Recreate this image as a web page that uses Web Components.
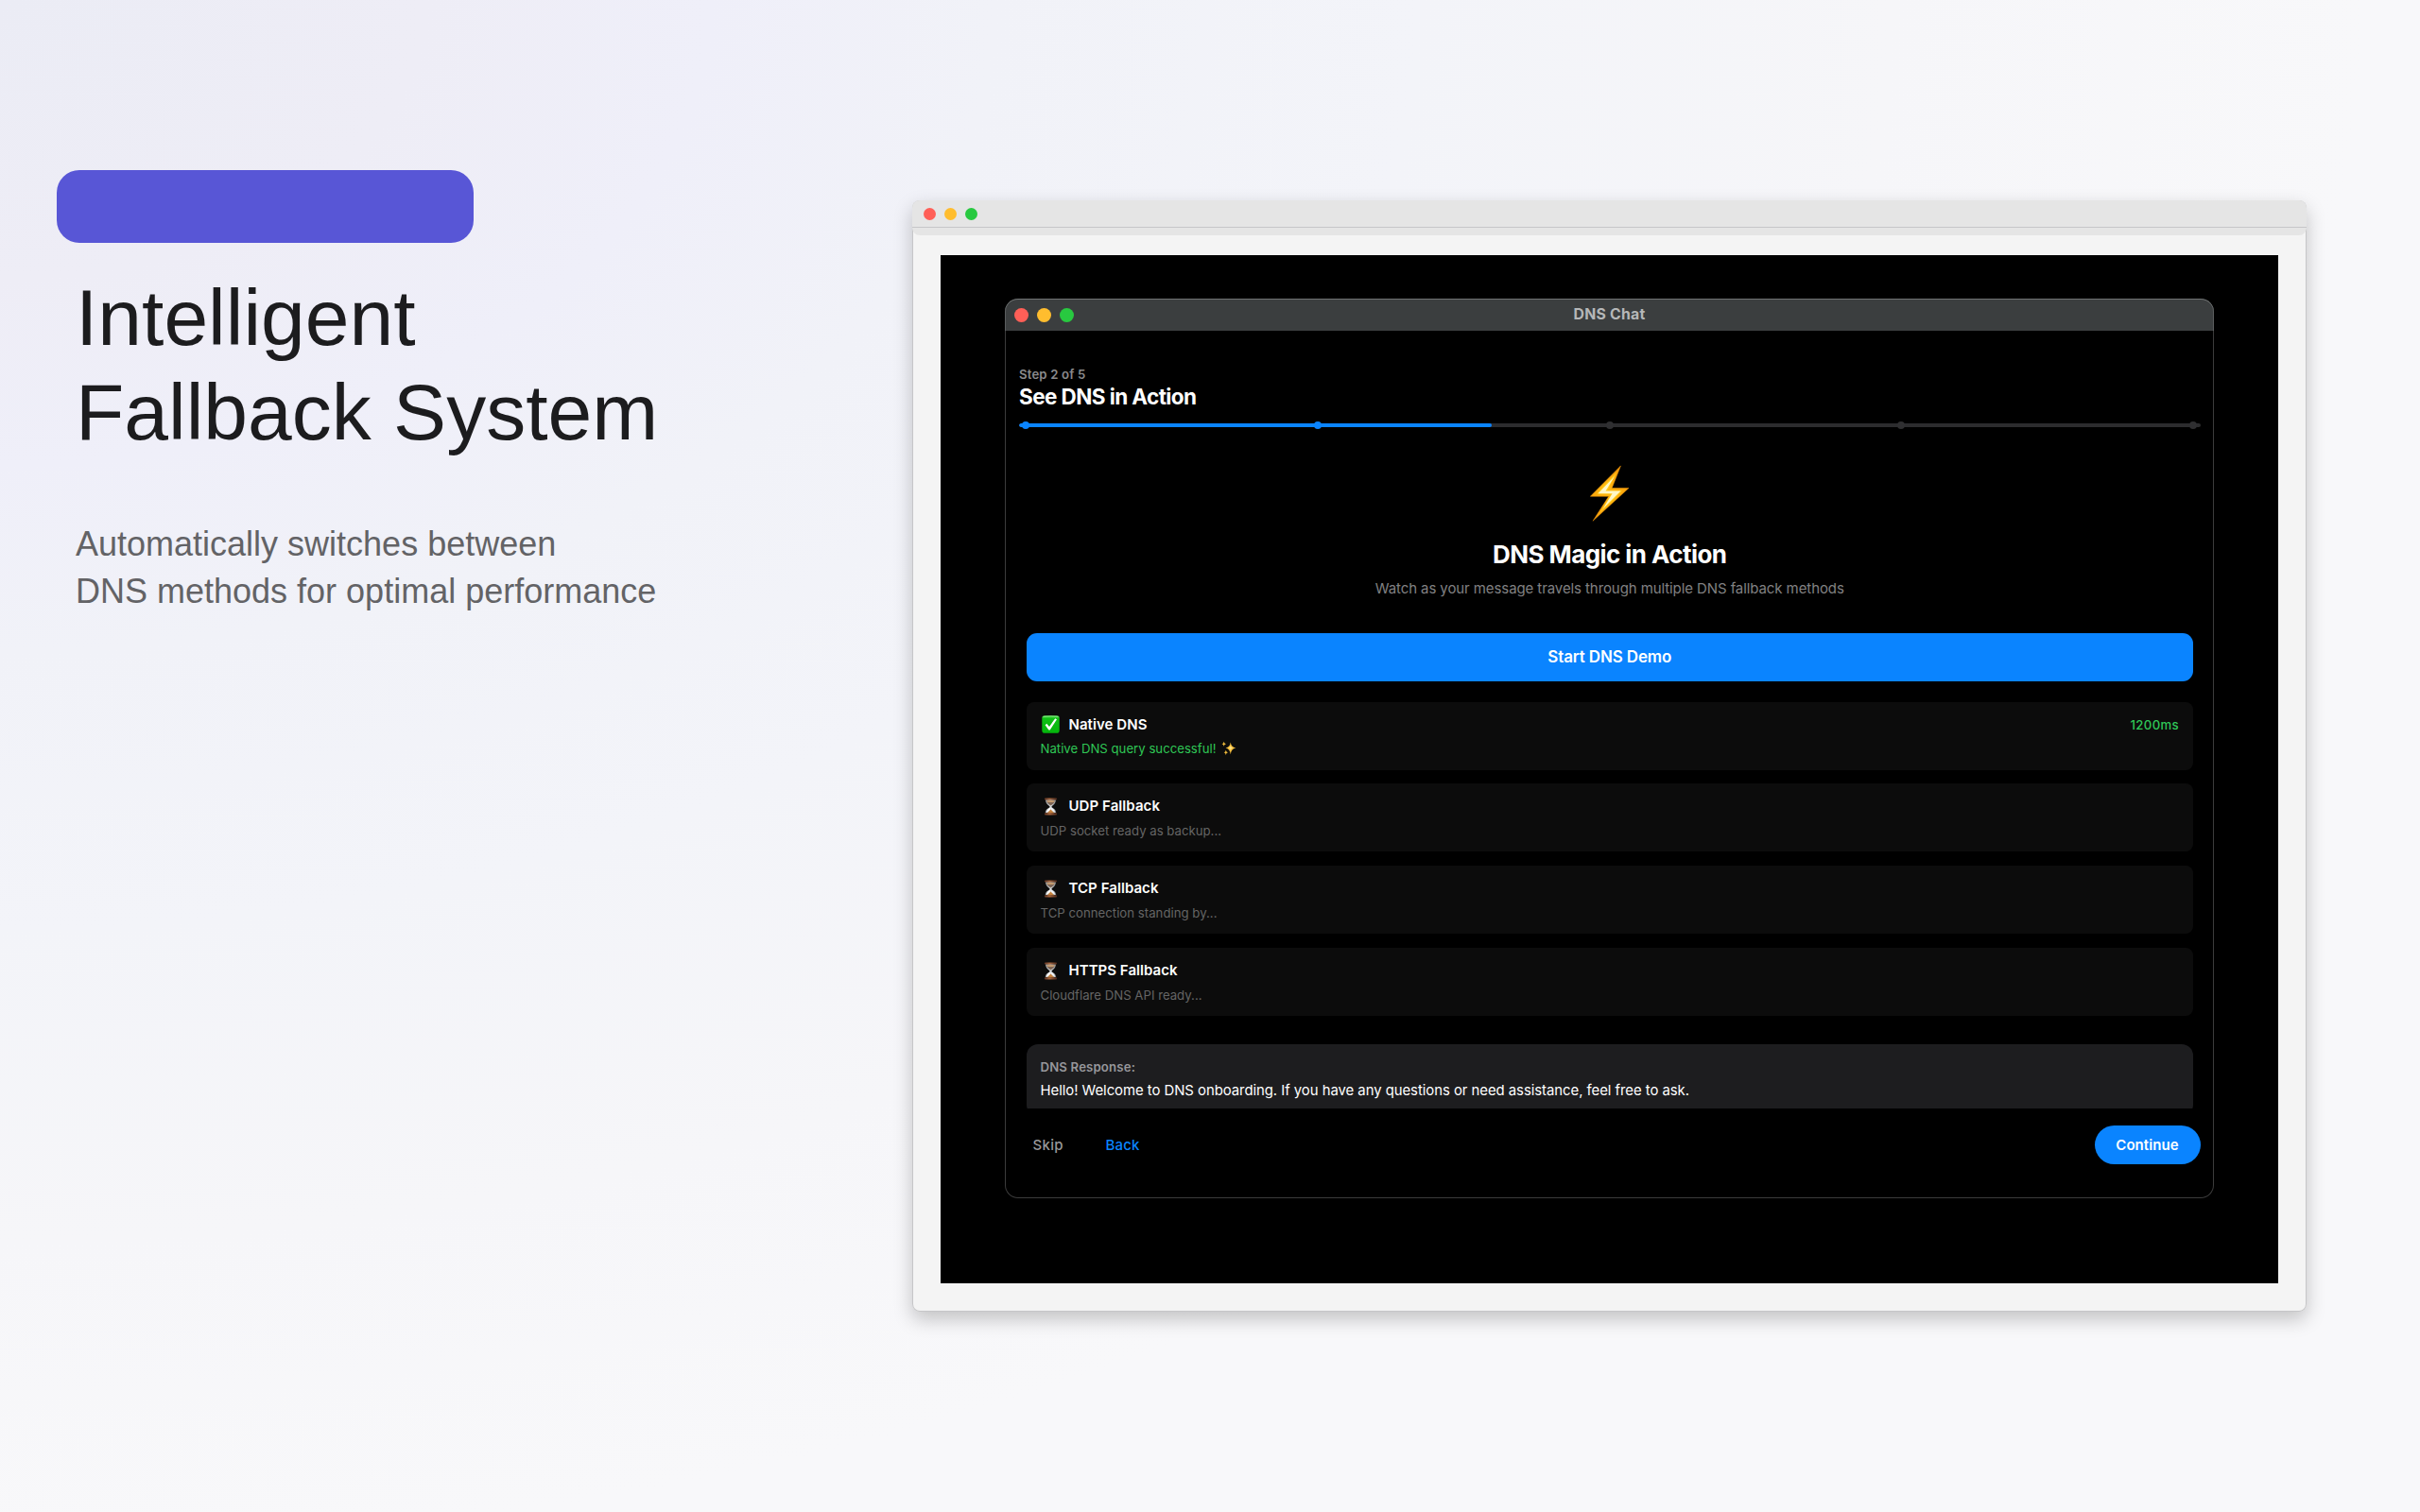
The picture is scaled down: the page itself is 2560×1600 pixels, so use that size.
<!DOCTYPE html>
<html lang="en">
<head>
<meta charset="utf-8">
<title>DNS Chat – Intelligent Fallback System</title>
<style>
html,body{margin:0;padding:0;width:2560px;height:1600px;overflow:hidden}
body{font-family:Inter,"Liberation Sans",sans-serif}
</style>
</head>
<body>
<promo-page></promo-page>
<script>
const define = (name, html, setup) => {
  const tpl = document.createElement('template');
  tpl.innerHTML = html;
  customElements.define(name, class extends HTMLElement {
    constructor() {
      super();
      this.attachShadow({mode: 'open'}).appendChild(tpl.content.cloneNode(true));
    }
    connectedCallback() { if (setup) setup(this, this.shadowRoot); }
  });
};

/* One line of text; "w" is the advance width the tracking is tuned to. */
define('fit-text', `
<style>:host{display:block;white-space:nowrap;flex:none}span{display:inline-block}</style>
<span><slot></slot></span>`, (host, root) => {
  const w = parseFloat(host.getAttribute('w'));
  const n = host.textContent.length;
  const span = root.querySelector('span');
  if (!w || !n) return;
  const now = span.getBoundingClientRect().width;
  span.style.letterSpacing = ((w - now) / n).toFixed(4) + 'px';
});

define('traffic-lights', `
<style>
:host{display:flex;gap:var(--gap,9px)}
i{width:var(--size,13px);height:var(--size,13px);border-radius:50%}
i:nth-of-type(1){background:#ff5f57}i:nth-of-type(2){background:#ffbd2e}i:nth-of-type(3){background:#28c940}
</style><i></i><i></i><i></i>`);

define('icon-check', `
<style>:host{display:block;width:19px;height:19px}svg{display:block}</style>
<svg width="19" height="19" viewBox="0 0 19 19">
<defs><linearGradient id="g" x1="0" y1="0" x2="0" y2="1"><stop offset="0" stop-color="#5fe05c"/><stop offset=".16" stop-color="#10c016"/><stop offset="1" stop-color="#04b50c"/></linearGradient></defs>
<rect x=".3" y=".3" width="18.4" height="18.4" rx="2.8" fill="url(#g)"/>
<path d="M1.5 1.6Q9.5.2 17.5 1.6" stroke="#a5f0a0" stroke-width=".8" fill="none" opacity=".7"/>
<path d="M3.6 10.2L5.3 8.7L8 12.1L14.2 3.2L16 4.2L8.7 15.6L7.4 15.6Z" fill="#fff"/>
</svg>`);

define('icon-hourglass', `
<style>:host{display:block;width:19px;height:19px}svg{display:block}</style>
<svg width="19" height="19" viewBox="0 0 19 19">
<defs><linearGradient id="w" x1="0" x2="1"><stop offset="0" stop-color="#5c3222"/><stop offset=".4" stop-color="#a8673f"/><stop offset="1" stop-color="#4c281b"/></linearGradient>
<linearGradient id="gl" x1="0" x2="1"><stop offset="0" stop-color="#8e9498"/><stop offset=".5" stop-color="#d9dcde"/><stop offset="1" stop-color="#7c8287"/></linearGradient></defs>
<path d="M4 2.3H15C15 6 12.3 8 10.6 9.2V10.2C12.4 11.4 15 12.5 15.2 16H3.8C4 12.5 6.6 11.4 8.4 10.2V9.2C6.7 8 4 6 4 2.3Z" fill="url(#gl)"/>
<path d="M5.3 3.8H13.7C13.2 6 11.3 7.3 9.5 8.4C7.7 7.3 5.8 6 5.3 3.8Z" fill="#7d6555"/>
<ellipse cx="9.5" cy="4" rx="4.3" ry="1.1" fill="#c49a6e"/>
<path d="M6 12.8Q7.5 11.3 9.2 10.6V13.6L4.6 16Z" fill="#fff"/><path d="M13 12.8Q11.5 11.3 9.8 10.6V13.6L14.4 16Z" fill="#eef1f5"/>
<path d="M9.5 12.6L13.3 16.5H5.7Z" fill="#c4813c"/>
<rect x="2.9" y=".5" width="13.2" height="1.9" rx=".9" fill="url(#w)"/>
<rect x="2.9" y="16.3" width="13.2" height="2.1" rx=".9" fill="url(#w)"/>
</svg>`);

define('icon-sparkles', `
<style>:host{display:block;width:16px;height:16px}svg{display:block}</style>
<svg width="16" height="16" viewBox="0 0 16 16"><g fill="#f3bd3c">
<path d="M9.8 1.6Q10.2 6.5 15.3 7.5Q10.2 8.5 9.8 14.2Q9.2 8.5 4.6 7.5Q9.2 6.5 9.8 1.6Z"/>
<path d="M2.7 .8Q3 3 5 3.3Q3 3.6 2.7 5.8Q2.4 3.6 .6 3.3Q2.4 3 2.7 .8Z"/>
<path d="M4.8 9.8Q5.1 12 7 12.3Q5.1 12.6 4.8 15Q4.5 12.6 2.7 12.3Q4.5 12 4.8 9.8Z"/></g>
<path d="M9.8 5Q10 7.2 12 7.5Q10 7.8 9.8 10Q9.6 7.8 7.8 7.5Q9.6 7.2 9.8 5Z" fill="#ffe690"/></svg>`);

define('icon-bolt', `
<style>:host{display:block;width:42px;height:60px}svg{display:block}</style>
<svg width="42" height="60" viewBox="0 0 42 60">
<defs><linearGradient id="b" x1="0" y1="1" x2="1" y2="0"><stop offset="0" stop-color="#f79a0e"/><stop offset=".5" stop-color="#ffb70e"/><stop offset="1" stop-color="#f58f0a"/></linearGradient></defs>
<path d="M32.5 .9L.3 33.3H19.7L3 59.3L41 24.5H23.2Z" fill="url(#b)" stroke="#e8930c" stroke-width=".5"/>
<path d="M28.5 7.500L7.200 30.600H23L10.500 50.500L34 27.200H18.300Z" fill="#ffcf1c"/>
<path d="M26 12L8.500 30.300H23.600L14 46L32.500 27.600H16.600Z" fill="#fff7c8"/>
</svg>`);

define('step-progress', `
<style>
:host{display:grid;height:4px;align-items:center}
:host>*{grid-area:1/1}
.track{height:4px;border-radius:2px;background:#2c2c2e;overflow:hidden}
.fill{width:40%;height:4px;border-radius:2px;background:#0a84ff}
.dots{display:flex;justify-content:space-between;padding:0 3.500px 0 3px;margin:-2px 0}
.dots i{width:8px;height:8px;border-radius:50%;background:#2f2f31}
.dots i.on{background:#0a84ff}
</style>
<div class="track"><div class="fill"></div></div>
<div class="dots"><i class="on"></i><i class="on"></i><i></i><i></i><i></i></div>`);

define('method-card', `
<style>
:host{display:flex;flex-direction:column;gap:5.500px;box-sizing:border-box;height:72px;padding:14px 15px 0;border-radius:8px;background:#0c0c0c;color:#656565;font-size:13.200px;line-height:20px}
:host([ok]){color:#2fc655}
.head{display:flex;align-items:center;height:20px;gap:10px;padding-left:1px}
.head ::slotted([slot=title]){flex:1;color:#fff;font-weight:600;font-size:15px}
.head ::slotted([slot=time]){font-weight:500;color:#30c758}
.sub{display:flex;align-items:center;gap:5px;height:20px}
</style>
<div class="head"><slot name="icon"></slot><slot name="title"></slot><slot name="time"></slot></div>
<div class="sub"><slot></slot></div>`);

define('app-window', `
<style>
:host{display:flex;flex-direction:column;box-sizing:border-box;width:1279px;height:952px;margin:46px 0 0 68px;border-radius:14px;background:#000;overflow:hidden;box-shadow:inset 0 0 0 1px #3c3c3c;color:#fff;flex:none}
.bar{display:grid;grid-template-columns:1fr auto 1fr;align-items:center;height:34px;box-sizing:border-box;flex:none;background:#3b3e3f;border-radius:14px 14px 0 0;box-shadow:inset 0 1px 0 #717474,inset 1px 0 0 #5a5d5e,inset -1px 0 0 #5a5d5e}
.bar traffic-lights{--size:15px;--gap:9.400px;padding-left:9.500px}
.title{font-size:15.800px;font-weight:700;color:#b5b7b8;line-height:20px}
.body{display:flex;flex-direction:column;padding:38px 14.500px 0 15px}
.step{font-size:13.200px;font-weight:600;line-height:16px;color:#8a8a8c}
.h{font-size:22.500px;font-weight:700;line-height:32px;margin-bottom:12px}
.main{display:flex;flex-direction:column;align-items:stretch;padding:40px 7.500px 0}
.hero{display:flex;flex-direction:column;align-items:center}
.hero .t{font-size:26px;font-weight:700;line-height:36px;margin-top:16.500px}
.hero .s{font-size:15px;line-height:20px;margin-top:8.500px;color:#808082}
.start{display:flex;align-items:center;justify-content:center;height:50.700px;margin-top:37px;border-radius:11px;background:#0a84ff;font-size:17px;font-weight:600}
.cards{display:flex;flex-direction:column;gap:14.800px;margin-top:22px}
.clip{height:68px;margin-top:30px;overflow:hidden}
.resp{height:76px;box-sizing:border-box;padding:13.500px 15px 0;border-radius:12px;background:#1d1d1f;line-height:20px}
.resp .l{font-size:13.200px;font-weight:600;color:#97979b}
.resp .m{font-size:14.900px;color:#fff;margin-top:5px}
.foot{display:flex;align-items:center;height:41px;margin-top:18px;padding-left:14.500px;font-size:15px;line-height:20px}
.skip{color:#98989a;font-weight:500}.back{color:#0a84ff;font-weight:500;margin-left:44.500px}
.cont{margin-left:auto;width:112px;height:41px;border-radius:21px;background:#0a84ff;display:flex;align-items:center;justify-content:center;font-weight:600}
</style>
<div class="bar"><traffic-lights></traffic-lights><fit-text class="title" w="76">DNS Chat</fit-text></div>
<div class="body">
 <fit-text class="step" w="70.500">Step 2 of 5</fit-text>
 <fit-text class="h" w="187.500">See DNS in Action</fit-text>
 <step-progress></step-progress>
 <div class="main">
  <div class="hero"><icon-bolt></icon-bolt>
   <fit-text class="t" w="247.500">DNS Magic in Action</fit-text>
   <fit-text class="s" w="496">Watch as your message travels through multiple DNS fallback methods</fit-text></div>
  <div class="start"><fit-text w="131">Start DNS Demo</fit-text></div>
  <div class="cards">
   <method-card ok><icon-check slot="icon"></icon-check><fit-text slot="title" w="83">Native DNS</fit-text><fit-text slot="time" w="51.500">1200ms</fit-text><fit-text w="186">Native DNS query successful!</fit-text><icon-sparkles></icon-sparkles></method-card>
   <method-card><icon-hourglass slot="icon"></icon-hourglass><fit-text slot="title" w="96.500">UDP Fallback</fit-text><fit-text w="191.500">UDP socket ready as backup...</fit-text></method-card>
   <method-card><icon-hourglass slot="icon"></icon-hourglass><fit-text slot="title" w="95">TCP Fallback</fit-text><fit-text w="187">TCP connection standing by...</fit-text></method-card>
   <method-card><icon-hourglass slot="icon"></icon-hourglass><fit-text slot="title" w="115">HTTPS Fallback</fit-text><fit-text w="171">Cloudflare DNS API ready...</fit-text></method-card>
  </div>
  <div class="clip"><div class="resp"><fit-text class="l" w="100.500">DNS Response:</fit-text><fit-text class="m" w="686.500">Hello! Welcome to DNS onboarding. If you have any questions or need assistance, feel free to ask.</fit-text></div></div>
 </div>
 <div class="foot"><fit-text class="skip" w="32.500">Skip</fit-text><fit-text class="back" w="36">Back</fit-text><div class="cont"><fit-text w="66.500">Continue</fit-text></div></div>
</div>`);

define('desktop-frame', `
<style>
:host{display:flex;flex-direction:column;box-sizing:border-box;width:1475px;height:1176px;flex:none;border-radius:8px;background:#f4f4f4;box-shadow:inset 0 0 0 1px #c6c6c8,0 8px 20px rgba(0,0,0,.22)}
.bar{display:flex;flex-direction:column;height:37px;border-radius:8px;background:#e5e5e5;flex:none}
.bar traffic-lights{padding:7.500px 0 0 12px;height:20.500px}
.line{height:1px;background:#c6c6c8}
.screen{display:flex;width:1415px;height:1088px;margin:21px 0 0 30px;background:#000}
</style>
<div class="bar"><traffic-lights></traffic-lights><div class="line"></div></div>
<div class="screen"><slot></slot></div>`);

define('promo-page', `
<style>
:host{display:flex;width:2560px;height:1600px;box-sizing:border-box;padding:180px 0 0 60px;
background:radial-gradient(ellipse 2500px 1640px at 0 0,#ebecf5 0,#eeedf6 18%,#efeff9 30%,#f1f2f8 42%,#f3f4f9 60%,#f6f6f9 80%,#f8f8fa 100%)}
.copy{width:905px;flex:none;font-family:"Liberation Sans",sans-serif}
.badge{width:441px;height:77px;border-radius:24px;background:#5856d6}
.title{margin:29px 0 0 20px;font-size:84px;line-height:100px;color:#1c1c1e;white-space:nowrap}
.text{margin:65px 0 0 20px;font-size:36px;line-height:50px;color:#636366;white-space:nowrap}
desktop-frame{margin-top:32px}
</style>
<div class="copy"><div class="badge"></div>
<div class="title"><fit-text>Intelligent</fit-text><fit-text>Fallback System</fit-text></div>
<div class="text"><fit-text>Automatically switches between</fit-text><fit-text>DNS methods for optimal performance</fit-text></div></div>
<desktop-frame><app-window></app-window></desktop-frame>`);
</script>
</body>
</html>
